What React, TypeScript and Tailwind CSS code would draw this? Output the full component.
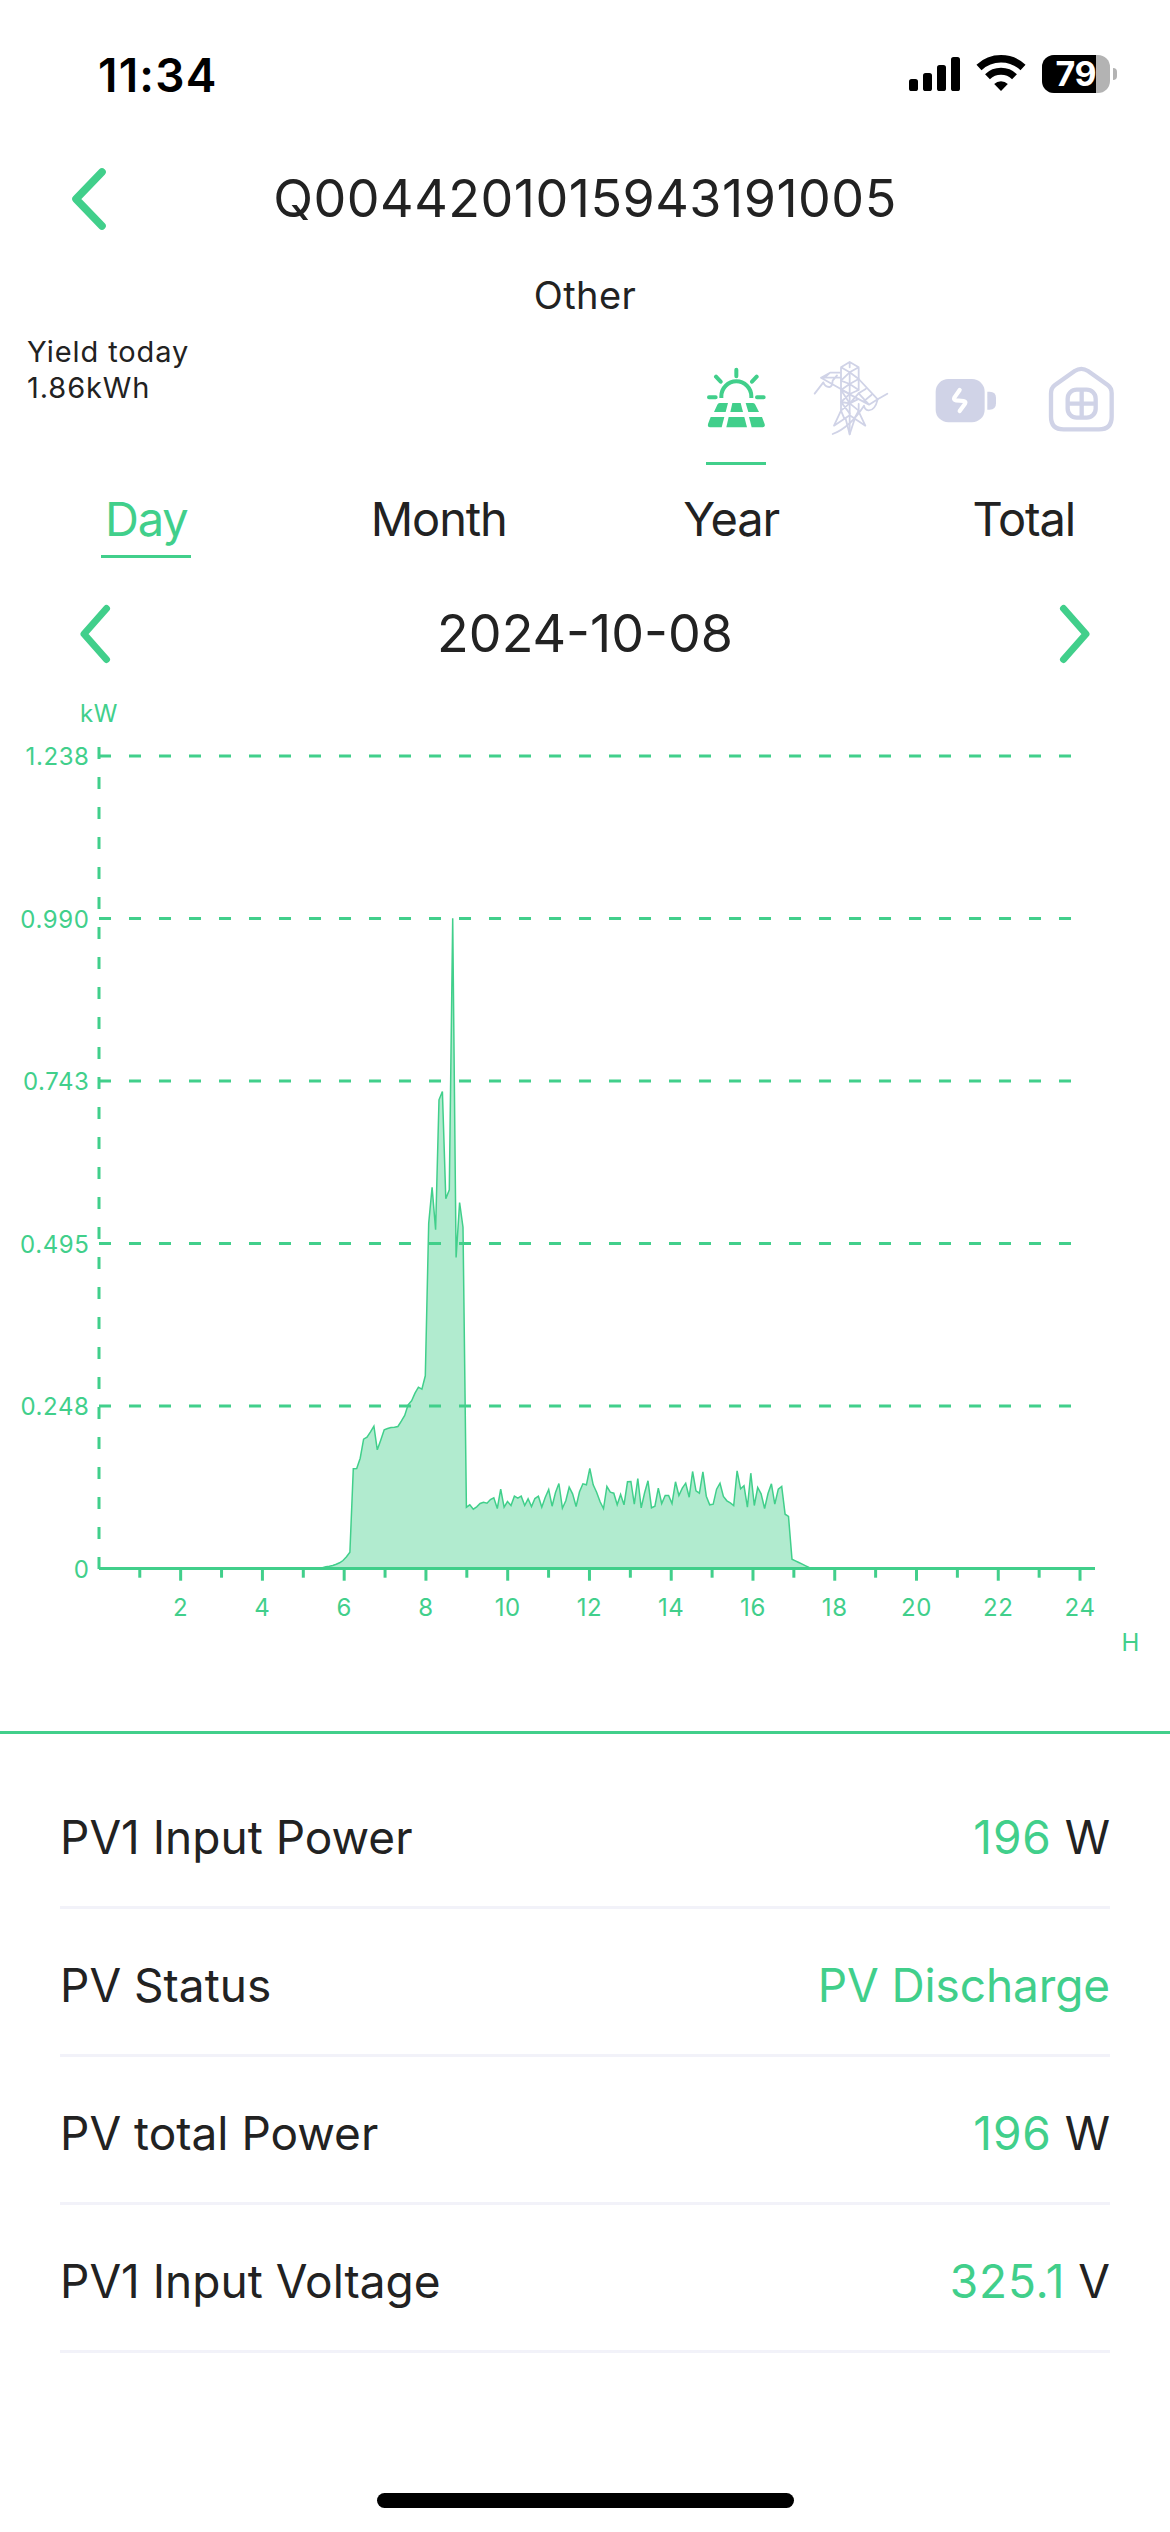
import React from 'react'

const GREEN = '#41cf8b'
const LILAC = '#d0d3e7'

type Period = 'Day' | 'Month' | 'Year' | 'Total'

interface Reading {
  label: string
  value: string
  unit?: string
}

const periods: Period[] = ['Day', 'Month', 'Year', 'Total']

const readings: Reading[] = [
  { label: 'PV1 Input Power', value: '196', unit: 'W' },
  { label: 'PV Status', value: 'PV Discharge' },
  { label: 'PV total Power', value: '196', unit: 'W' },
  { label: 'PV1 Input Voltage', value: '325.1', unit: 'V' },
]

// PV output samples, three units per chart pixel.
const samples = [
  5, 7, 9, 13, 17, 24, 35, 49, 299, 300, 331, 388, 394, 410, 427, 356, 385, 416, 420, 423,
  424, 426, 442, 459, 491, 503, 526, 544, 538, 578, 1036, 1144, 1016, 1406, 1431, 1109, 1136,
  1951, 933, 1098, 1024, 184, 191, 178, 185, 195, 199, 196, 207, 212, 180, 238, 184, 201, 189,
  217, 211, 217, 189, 209, 186, 210, 217, 184, 213, 237, 187, 228, 255, 181, 203, 244, 224,
  186, 230, 254, 251, 300, 251, 229, 200, 180, 246, 229, 226, 191, 222, 191, 260, 261, 193,
  270, 182, 227, 263, 182, 187, 241, 195, 219, 219, 195, 260, 219, 241, 256, 214, 291, 233,
  226, 290, 217, 191, 193, 238, 256, 216, 203, 197, 189, 293, 239, 248, 184, 286, 189, 243,
  224, 180, 225, 254, 193, 238, 246, 163, 156, 28, 23, 18, 13, 8, 3,
]

const yLabels = ['1.238', '0.990', '0.743', '0.495', '0.248', '0']

function StatusBar(): React.ReactElement {
  return (
    <div className="flex h-[140px] items-start justify-between pl-[98px] pr-[53px]">
      <span className="mt-[50px] text-[46px] leading-[50px] font-semibold tracking-[1.2px] text-black">11:34</span>
      <div className="mt-[55px] flex items-start">
        <svg width="52" height="38" viewBox="907 55 52 38">
          <rect x="907" y="79" width="9" height="12" rx="2.6" />
          <rect x="921" y="73" width="9" height="18" rx="2.6" />
          <rect x="935" y="65" width="9" height="26" rx="2.6" />
          <rect x="949" y="57" width="9" height="34" rx="2.6" />
        </svg>
        <svg className="ml-[15px]" width="50" height="38" viewBox="974 55 50 38" fill="none" stroke="#000">
          <path d="M977 67.5A32.2 32.2 0 0 1 1021 67.5" strokeWidth="7.4" />
          <path d="M985.5 76.8A19.5 19.5 0 0 1 1012.5 76.8" strokeWidth="7" />
          <path d="M999 91L992.2 83.9A10 10 0 0 1 1005.8 83.9Z" fill="#000" stroke="none" />
        </svg>
        <div className="ml-4 flex h-[38px] w-[68px] rounded-[12px] bg-[#b3b3b3]">
          <div className="flex h-[38px] w-[54px] items-center justify-end rounded-l-[12px] bg-black">
            <span className="text-[34px] leading-[38px] font-bold tracking-[-0.5px] text-white">79</span>
          </div>
        </div>
        <div className="mt-[13px] ml-[3px] h-[12px] w-[4px] rounded-r-full bg-[#b3b3b3]" />
      </div>
    </div>
  )
}

function BackIcon(): React.ReactElement {
  return (
    <svg className="ml-[71px]" width="36" height="64" viewBox="0 0 36 64" fill="none" stroke={GREEN}
      strokeWidth="7.6" strokeLinecap="round" strokeLinejoin="round">
      <path d="M31 5L5 32L31 59" />
    </svg>
  )
}

function Chevron({ flip = false }: { flip?: boolean }): React.ReactElement {
  return (
    <svg width="31" height="60" viewBox="0 0 31 60" fill="none" stroke={GREEN}
      strokeWidth="7" strokeLinecap="round" strokeLinejoin="round">
      <path d={flip ? 'M4.5 4.5L27 30L4.5 55.5' : 'M26.5 4.5L4 30L26.5 55.5'} />
    </svg>
  )
}

function SolarIcon(): React.ReactElement {
  return (
    <svg width="80" height="80" viewBox="44 54 240 240" fill="none" stroke={GREEN} strokeWidth="12" strokeLinecap="round">
      <path d="M120 174V169A45 45 0 0 1 210 169V174" strokeLinecap="butt" />
      <path d="M165 89V109M104 110L118 125M226 110L212 125M83 172H103M227 172H247" />
      <g fill={GREEN} stroke="none">
        <path d="M115 189H140L133 216H98L108 194Q110 189 115 189Z" />
        <path d="M153 189H178L185 216H147Z" />
        <path d="M193 189H215Q220 189 222 194L233 216H201Z" />
        <path d="M88 231H129L121 262H86Q78 262 80 252Z" />
        <path d="M142 231H189L197 262H135Z" />
        <path d="M203 231H242L250 252Q252 262 244 262H211Z" />
      </g>
    </svg>
  )
}

function GridIcon(): React.ReactElement {
  return (
    <svg width="80" height="80" viewBox="390 54 240 240" fill="none" stroke={LILAC} strokeWidth="5.4"
      strokeLinecap="round" strokeLinejoin="round">
      {/* mast */}
      <path d="M480 212V82L506 66L533 82V148M533 192V215M506 68V82M506 97V283M480 82L506 97L533 82" />
      <path d="M506 97L480 122L506 132L533 117M480 122L506 97L533 117M480 150L506 132L533 150M480 150L506 162L533 150" />
      <path d="M480 150L506 190L533 160M480 186L506 162M480 186L506 190L530 178M480 212L506 190L533 212M480 186L506 220" />
      {/* left arm */}
      <path d="M476 98H447L420 113L506 162M420 113H478M447 98L432 112M401 161L427 127Q432 142 446 141Q454 140 455 122L468 106" />
      {/* right arm */}
      <path d="M533 117L590 178L564 194L506 163M533 160L554 147M548 184L571 165M533 160L564 194M619 161L590 178" />
      <path d="M590 178Q582 212 562 211Q551 210 549 197Q507 262 455 282" />
      {/* feet */}
      <path d="M480 212L459 257L506 226L553 257L533 215M480 212L490 236M533 212L520 236M494 236L506 283L520 240" />
    </svg>
  )
}

function BatteryIcon(): React.ReactElement {
  return (
    <svg width="80" height="80" viewBox="735 54 240 240" fill={LILAC}>
      <rect x="764" y="117" width="147" height="130" rx="38" />
      <path d="M919 155H926Q945 155 945 174V190Q945 209 926 209H919Z" />
      <path d="M836 150L820 173Q817 180 825 181L848 183Q856 184 852 191L836 213" fill="none" stroke="#fff"
        strokeWidth="12.5" strokeLinecap="round" strokeLinejoin="round" />
    </svg>
  )
}

function HomeIcon(): React.ReactElement {
  return (
    <svg width="80" height="80" viewBox="1081 54 240 240" fill="none" stroke={LILAC} strokeWidth="13">
      <path d="M1111 160Q1111 144 1123 135L1182 93Q1202 80 1222 93L1281 135Q1293 144 1293 160V230Q1293 268 1255 268H1149Q1111 268 1111 230Z" />
      <rect x="1161" y="149" width="84" height="84" rx="27" />
      <path d="M1203 149V233M1161 191H1245" />
    </svg>
  )
}

function PowerChart(): React.ReactElement {
  const left = 98.9
  const base = 1568.5
  const hour = 40.88
  const firstX = 325.9
  const step = 3.427
  const line = samples.map((v, i) => `${(firstX + i * step).toFixed(1)} ${(base - v / 3).toFixed(1)}`).join('L')
  const lastX = firstX + samples.length * step
  const hours = Array.from({ length: 24 }, (_, i) => i + 1)

  return (
    <svg className="block" width="1170" height="1041" viewBox="0 690 1170 1041">
      <g fill={GREEN} className="font-[Inter,sans-serif] text-[24px] tracking-[0.6px]">
        <text x="80" y="722">kW</text>
        <text x="1121.5" y="1651">H</text>
        {yLabels.map((label, i) => (
          <text key={label} x="89.5" y={765 + i * 162.5} textAnchor="end">{label}</text>
        ))}
        {hours.filter((h) => h % 2 === 0).map((h) => (
          <text key={h} x={left + h * hour} y="1616" textAnchor="middle">{h}</text>
        ))}
      </g>
      <g stroke={GREEN} strokeWidth="3">
        {yLabels.slice(0, -1).map((label, i) => (
          <path key={label} d={`M99 ${756 + i * 162.5}H1073`} strokeDasharray="12 18" />
        ))}
        <path d="M99 1569V745" strokeDasharray="12 18" />
        <path d="M99 1568.5H1095" />
        {hours.map((h) => (
          <path key={h} d={`M${left + h * hour} 1570V${h % 2 === 0 ? 1580.7 : 1577.7}`} />
        ))}
      </g>
      <path d={`M${firstX - 6} ${base}L${line}L${lastX} ${base}Z`} fill={GREEN} fillOpacity="0.41" />
      <path d={`M${firstX - 6} ${base}L${line}L${lastX} ${base}`} fill="none" stroke={GREEN} strokeWidth="1.5" />
    </svg>
  )
}

export default function App(): React.ReactElement {
  const active: Period = 'Day'

  return (
    <div className="flex h-[2532px] w-[1170px] flex-col overflow-hidden bg-white font-[Inter,sans-serif] text-[#222222]">
      <StatusBar />

      <header className="grid h-[118px] grid-cols-[150px_1fr_150px] items-center">
        <BackIcon />
        <h1 className="text-center text-[52px] leading-[64px] tracking-[0.5px] whitespace-nowrap">Q0044201015943191005</h1>
      </header>
      <p className="h-[74px] text-center text-[38px] leading-[74px] tracking-[0.4px]">Other</p>

      <div className="flex h-[134px] justify-between pr-[32px] pl-[27px]">
        <div className="pt-[2px] text-[29px] leading-[36px] tracking-[0.9px]">
          <p>Yield today</p>
          <p>1.86kWh</p>
        </div>
        <div className="grid w-[460px] grid-cols-4 justify-items-center pt-[26px]">
          <div className="flex flex-col items-center">
            <SolarIcon />
            <div className="mt-[24px] h-[3px] w-[60px] bg-[#41cf8b]" />
          </div>
          <GridIcon />
          <BatteryIcon />
          <HomeIcon />
        </div>
      </div>

      <nav className="grid h-[92px] grid-cols-4 justify-items-center pt-[16px]">
        {periods.map((p) => (
          <button
            key={p}
            className={p === active
              ? 'h-[76px] w-[90px] border-b-[3px] border-[#41cf8b] text-[47px] leading-[73px] tracking-[-1.1px] text-[#41cf8b]'
              : 'h-[76px] border-b-[3px] border-transparent text-[47px] leading-[73px] tracking-[-1.1px]'}
          >
            {p}
          </button>
        ))}
      </nav>

      <div className="flex h-[132px] items-center justify-between px-[80px] pt-[19px]">
        <Chevron />
        <span className="text-[52px] leading-[64px]">2024-10-08</span>
        <Chevron flip />
      </div>

      <PowerChart />
      <div className="h-[3px] shrink-0 bg-[#41cf8b]" />

      <main className="mt-[27px] flex-1 px-[60px]">
        {readings.map((r) => (
          <div key={r.label} className="flex h-[148px] items-center justify-between border-b-[3px] border-[#f2f2f9] pt-[8px] text-[46px]">
            <span>{r.label}</span>
            <span>
              <span className={r.unit ? 'tracking-[0.9px] text-[#41cf8b]' : 'tracking-[-0.1px] text-[#41cf8b]'}>{r.value}</span>
              {r.unit && ` ${r.unit}`}
            </span>
          </div>
        ))}
      </main>
      <div className="mx-auto mb-[24px] h-[15px] w-[417px] rounded-full bg-black" />
    </div>
  )
}
